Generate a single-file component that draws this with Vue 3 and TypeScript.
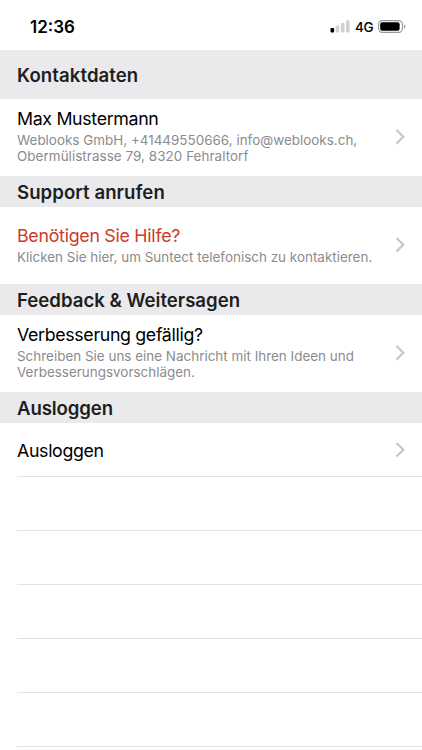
<script setup lang="ts">
interface Row {
  title: string
  lines: string[]
  accent?: boolean
}
interface Section {
  key: string
  heading: string
  row: Row
}

const sections: Section[] = [
  {
    key: 'contact',
    heading: 'Kontaktdaten',
    row: {
      title: 'Max Mustermann',
      lines: ['Weblooks GmbH, +41449550666, info@weblooks.ch,', 'Obermülistrasse 79, 8320 Fehraltorf'],
    },
  },
  {
    key: 'support',
    heading: 'Support anrufen',
    row: {
      title: 'Benötigen Sie Hilfe?',
      lines: ['Klicken Sie hier, um Suntect telefonisch zu kontaktieren.'],
      accent: true,
    },
  },
  {
    key: 'feedback',
    heading: 'Feedback & Weitersagen',
    row: {
      title: 'Verbesserung gefällig?',
      lines: ['Schreiben Sie uns eine Nachricht mit Ihren Ideen und', 'Verbesserungsvorschlägen.'],
    },
  },
  { key: 'logout', heading: 'Ausloggen', row: { title: 'Ausloggen', lines: [] } },
]
const emptyRows = 5
</script>

<template>
  <div class="screen">
    <header class="status">
      <span class="time">12:36</span>
      <div class="indicators">
        <svg class="signal" width="20" height="13" viewBox="0 0 20 13">
          <rect x="0.5" y="8" width="3.6" height="4.5" rx="1" fill="#000" />
          <rect x="5.7" y="5.5" width="3.6" height="7" rx="1" fill="#d0d0d0" />
          <rect x="10.9" y="3" width="3.6" height="9.5" rx="1" fill="#d0d0d0" />
          <rect x="16" y="0.3" width="3.6" height="12.2" rx="1" fill="#d0d0d0" />
        </svg>
        <span class="network">4G</span>
        <svg class="battery" width="28" height="13" viewBox="0 0 28 13">
          <rect x="0.6" y="0.6" width="23.8" height="11.8" rx="3.6" fill="none" stroke="#999" stroke-width="1.1" />
          <rect x="2.2" y="2.2" width="19.4" height="8.6" rx="2" fill="#000" />
          <path d="M26 4.4v4.2c.9-.4 1.4-1.2 1.4-2.1S26.9 4.8 26 4.4z" fill="#999" />
        </svg>
      </div>
    </header>

    <main>
      <section v-for="s in sections" :key="s.key" :class="s.key">
        <h2 class="heading">{{ s.heading }}</h2>
        <div class="row">
          <div class="copy">
            <span class="title" :class="{ accent: s.row.accent }">{{ s.row.title }}</span>
            <span v-for="line in s.row.lines" :key="line" class="line">{{ line }}</span>
          </div>
          <svg class="chevron" width="10" height="16" viewBox="0 0 10 16">
            <path d="M1.5 1.100L8.300 7.800l-6.800 6.700" fill="none" stroke="#c5c5c9" stroke-width="2.1" />
          </svg>
        </div>
      </section>
      <div v-for="n in emptyRows" :key="n" class="empty"></div>
    </main>
  </div>
</template>

<style>
body {
  background: #fff;
}
</style>

<style scoped>
.screen {
  width: 100%;
  height: 750px;
  overflow: hidden;
  background: #fff;
  color: #000;
  font-family: Inter, 'Liberation Sans', sans-serif;
}
.status {
  display: flex;
  justify-content: space-between;
  height: 50px;
  box-sizing: border-box;
  padding: 16px 16px 0 30px;
}
.time {
  font-size: 17px;
  line-height: 22px;
  font-weight: 600;
}
.indicators {
  display: flex;
  align-items: flex-start;
  padding-top: 4px;
}
.network {
  margin: -1px 0 0 5px;
  width: 23px;
  font-size: 13.5px;
  line-height: 16px;
  font-weight: 500;
  letter-spacing: -0.3px;
}
.heading {
  display: flex;
  align-items: center;
  box-sizing: border-box;
  height: 31.5px;
  margin: 0;
  padding: 2px 0 0 17px;
  background: #eaeaec;
  color: #1e1e20;
  font-size: 18.6px;
  line-height: 24px;
  font-weight: 600;
}
.contact .heading {
  height: 49px;
  padding-top: 1px;
  letter-spacing: 0.08px;
}
.support .heading {
  letter-spacing: 0.06px;
}
.logout .heading {
  letter-spacing: -0.1px;
}
.row {
  display: flex;
  align-items: center;
  justify-content: space-between;
  box-sizing: border-box;
  height: 76.5px;
  padding: 0 17px 0 17px;
}
.copy {
  display: flex;
  flex-direction: column;
  white-space: nowrap;
}
.contact .copy,
.feedback .copy {
  padding-bottom: 3px;
}
.title {
  font-size: 17.8px;
  line-height: 24px;
  letter-spacing: -0.34px;
}
.support .title {
  letter-spacing: -0.27px;
}
.accent {
  color: #cc3a2b;
}
.line {
  font-size: 13.45px;
  line-height: 15.8px;
  color: #8b8b8d;
}
.contact .line:last-child {
  letter-spacing: 0.05px;
}
.title + .line {
  margin-top: 2px;
}
.logout .row {
  height: 54px;
  border-bottom: 1px solid #e1e1e3;
  margin-left: 17px;
  padding-left: 0;
}
.logout .copy {
  padding-top: 2px;
}
.empty {
  box-sizing: border-box;
  height: 54px;
  margin-left: 17px;
  border-bottom: 1px solid #e1e1e3;
}
</style>
